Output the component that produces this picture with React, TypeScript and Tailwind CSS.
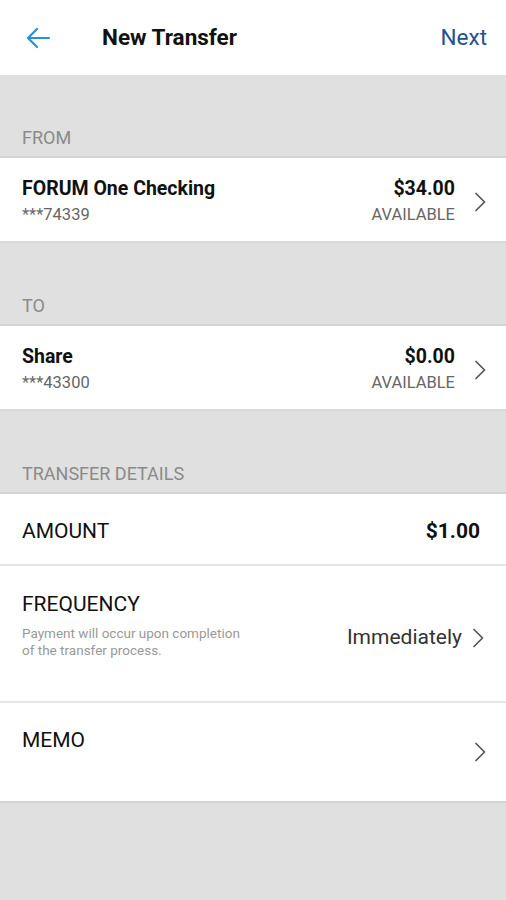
import React from "react";

const Chevron = () => (
  <svg width="14" height="22" viewBox="0 0 14 22" fill="none" className="shrink-0">
    <path d="M3 2.5l8.5 8.5-8.5 8.5" stroke="#555" strokeWidth="1.7" strokeLinecap="round" strokeLinejoin="round" />
  </svg>
);

const SectionHeader = ({ label }: { label: string }) => (
  <div className="h-[83px] bg-[#e0e0e0] border-b-2 border-[#d4d4d4] flex items-end pb-[7px] px-[22px] shrink-0">
    <span className="text-[18px] text-[#8a8a8a] leading-[22px]">{label}</span>
  </div>
);

const AccountRow = ({ name, acct, amount }: { name: string; acct: string; amount: string }) => (
  <div className="h-[85px] bg-white border-b-2 border-[#d9d9d9] flex items-start pt-[18px] pl-[22px] pr-[19px] shrink-0">
    <div className="flex-1 flex flex-col">
      <span className="text-[19.5px] font-bold text-[#111] leading-[26px]">{name}</span>
      <span className="text-[16.5px] text-[#666] leading-[26px]">{acct}</span>
    </div>
    <div className="flex flex-col items-end mr-[18px]">
      <span className="text-[19.5px] font-bold text-[#111] leading-[26px]">{amount}</span>
      <span className="text-[16.5px] text-[#666] leading-[26px]">AVAILABLE</span>
    </div>
    <div className="mt-[15px]">
      <Chevron />
    </div>
  </div>
);

export default function App() {
  return (
    <div className="w-[506px] h-[900px] bg-[#e0e0e0] flex flex-col" style={{ fontFamily: "Roboto, sans-serif" }}>
      <div className="h-[75px] bg-white flex items-center px-[24px] shrink-0">
        <svg width="28" height="24" viewBox="0 0 28 24" fill="none" className="mr-[50px]">
          <path d="M25 12H4M13 3l-9 9 9 9" stroke="#2a8fd6" strokeWidth="2.2" strokeLinecap="round" strokeLinejoin="round" />
        </svg>
        <span className="flex-1 text-[22.5px] font-bold text-[#111]">New Transfer</span>
        <span className="text-[22.5px] text-[#23508f] mr-[-5px]">Next</span>
      </div>

      <SectionHeader label="FROM" />
      <AccountRow name="FORUM One Checking" acct="***74339" amount="$34.00" />

      <SectionHeader label="TO" />
      <AccountRow name="Share" acct="***43300" amount="$0.00" />

      <SectionHeader label="TRANSFER DETAILS" />
      <div className="h-[72px] bg-white border-b-2 border-[#e6e6e6] flex items-center pt-[5px] pl-[22px] pr-[26px] shrink-0">
        <span className="flex-1 text-[21px] text-[#111]">AMOUNT</span>
        <span className="text-[21px] font-bold text-[#111]">$1.00</span>
      </div>
      <div className="h-[137px] bg-white border-b-2 border-[#e6e6e6] flex pl-[22px] pr-[21px] pt-[24px] shrink-0">
        <div className="flex-1 flex flex-col">
          <span className="text-[21px] text-[#111] leading-[28px]">FREQUENCY</span>
          <span className="text-[13.5px] text-[#999] leading-[17px] mt-[7px] w-[232px]">
            Payment will occur upon completion of the transfer process.
          </span>
        </div>
        <div className="flex items-center gap-[9px] h-[24px] mt-[36px]">
          <span className="text-[21px] text-[#333]">Immediately</span>
          <Chevron />
        </div>
      </div>
      <div className="h-[100px] bg-white border-b-2 border-[#d4d4d4] flex pl-[22px] pr-[19px] pt-[23px] shrink-0">
        <span className="flex-1 text-[21px] text-[#111] leading-[28px]">MEMO</span>
        <div className="mt-[15px]">
          <Chevron />
        </div>
      </div>
    </div>
  );
}
